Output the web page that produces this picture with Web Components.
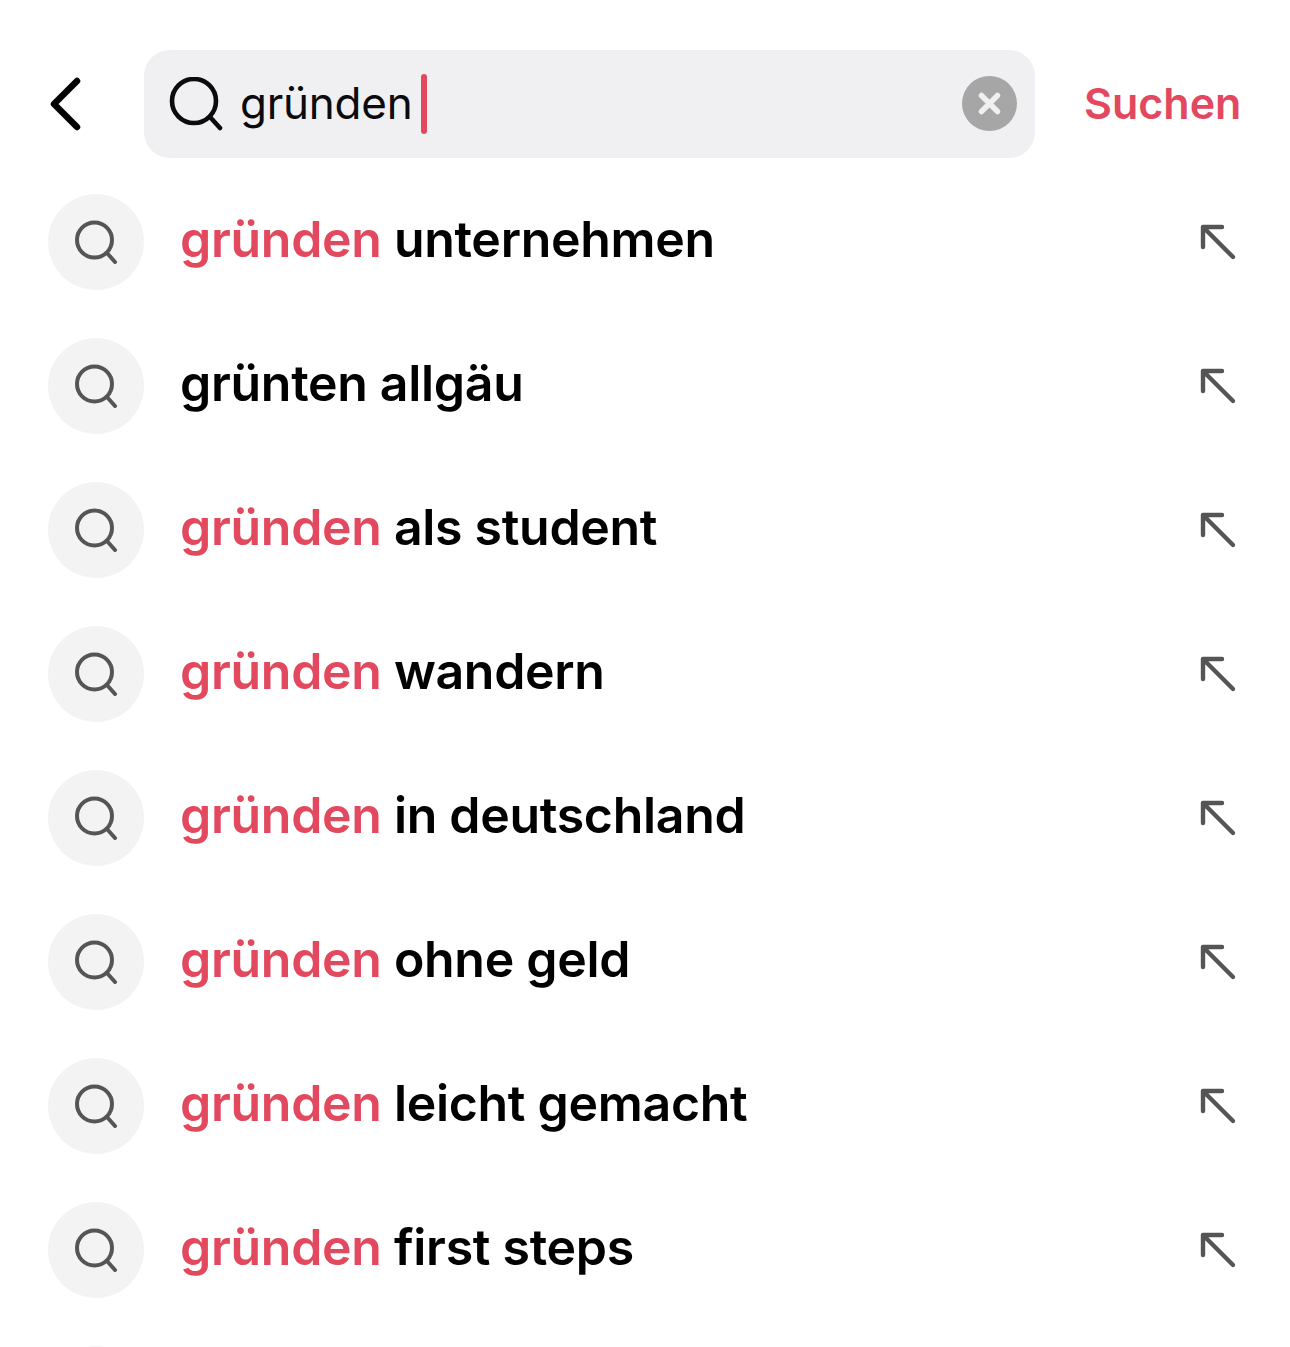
<!DOCTYPE html>
<html lang="de">
<head>
<meta charset="utf-8">
<title>Suche</title>
<style>
html, body { margin: 0; height: 100%; overflow: hidden; background: #fff; }
body { font-family: Inter, "Liberation Sans", sans-serif; }
</style>
</head>
<body>
<search-page>
    <search-bar slot="bar" value="gründen"></search-bar>
    <suggestion-row match="gründen" rest=" unternehmen"></suggestion-row>
    <suggestion-row rest="grünten allgäu"></suggestion-row>
    <suggestion-row match="gründen" rest=" als student"></suggestion-row>
    <suggestion-row match="gründen" rest=" wandern"></suggestion-row>
    <suggestion-row match="gründen" rest=" in deutschland"></suggestion-row>
    <suggestion-row match="gründen" rest=" ohne geld"></suggestion-row>
    <suggestion-row match="gründen" rest=" leicht gemacht"></suggestion-row>
    <suggestion-row match="gründen" rest=" first steps"></suggestion-row>
    <suggestion-row></suggestion-row>
</search-page>

<script>
const pageTemplate = document.createElement("template");
pageTemplate.innerHTML = `
<style>
:host {
  display: block;
  width: 1290px;
  height: 1347px;
  overflow: hidden;
  box-sizing: border-box;
  padding: 50px 48px 0;
}
.list {
  display: flex;
  flex-direction: column;
  gap: 48px;
  margin-top: 36px;
}
</style>
<slot name="bar"></slot>
<div class="list"><slot></slot></div>
`;

class SearchPage extends HTMLElement {
    constructor () {
	super();
	this.attachShadow({ mode: "open" });
	this.shadowRoot.appendChild( pageTemplate.content.cloneNode(true) );
    }
}

const barTemplate = document.createElement("template");
barTemplate.innerHTML = `
<style>
:host {
  display: flex;
  align-items: center;
  height: 108px;
}
.back {
  width: 96px;
  flex: none;
  display: flex;
}
.field {
  flex: none;
  width: 891px;
  height: 108px;
  box-sizing: border-box;
  padding: 0 18px 0 25px;
  display: flex;
  align-items: center;
  background: #f0f0f2;
  border-radius: 26px;
}
.value {
  margin-left: 17px;
  font-size: 44px;
  letter-spacing: -0.25px;
  color: #0b0b0f;
  white-space: pre;
  position: relative;
  top: -1px;
}
.caret {
  width: 6px;
  height: 60px;
  margin-left: 9px;
  border-radius: 3px;
  background: #e2495f;
}
.clear {
  margin-left: auto;
  display: flex;
  position: relative;
  top: -1px;
}
.submit {
  margin-left: 49px;
  font-size: 43px;
  font-weight: 600;
  color: #e2495f;
  white-space: pre;
  position: relative;
  top: -1px;
}
svg { display: block; }
</style>
<div class="back">
    <svg width="36" height="56" viewBox="0 0 36 56" fill="none" stroke="#000" stroke-width="6.5" stroke-linecap="round" stroke-linejoin="round"><path d="M29 5 L6 28 L29 51"/></svg>
</div>
<div class="field">
    <svg width="54" height="54" viewBox="0 0 54 54" fill="none" stroke="#0b0b0f" stroke-width="4.6" stroke-linecap="round"><circle cx="25" cy="24" r="22"/><path d="M41 40 L51 51"/></svg>
    <span class="value"></span>
    <span class="caret"></span>
    <span class="clear">
	<svg width="55" height="55" viewBox="0 0 55 55"><circle cx="27.5" cy="27.5" r="27.5" fill="#a6a6a6"/><path d="M19.5 19.5 L35.5 35.5 M35.5 19.5 L19.5 35.5" stroke="#f0f0f2" stroke-width="5.5" stroke-linecap="round"/></svg>
    </span>
</div>
<span class="submit">Suchen</span>
`;

class SearchBar extends HTMLElement {
    constructor () {
	super();
	this.attachShadow({ mode: "open" });
	this.shadowRoot.appendChild( barTemplate.content.cloneNode(true) );
	this.$value = this.shadowRoot.querySelector(".value");
    }

    connectedCallback() {
	this.$value.textContent = this.getAttribute("value") || "";
    }
}

const rowTemplate = document.createElement("template");
rowTemplate.innerHTML = `
<style>
:host {
  display: flex;
  align-items: center;
  height: 96px;
  flex: none;
}
.bubble {
  width: 96px;
  height: 96px;
  flex: none;
  border-radius: 50%;
  background: #f3f3f3;
  display: flex;
  align-items: center;
  justify-content: center;
}
.text {
  margin-left: 36px;
  font-size: 50px;
  font-weight: 600;
  letter-spacing: -0.3px;
  color: #000;
  white-space: pre;
  position: relative;
  top: -3px;
}
.match { color: #e2495f; }
.fill {
  flex: 1;
}
svg { display: block; }
</style>
<div class="bubble">
    <svg width="44" height="44" viewBox="0 0 44 44" fill="none" stroke="#555" stroke-width="4" stroke-linecap="round"><circle cx="20.5" cy="20" r="17.5"/><path d="M33 33 L41 42"/></svg>
</div>
<div class="text"><span class="match"></span><span class="rest"></span></div>
<div class="fill"></div>
<svg width="40" height="40" viewBox="0 0 40 40" fill="none" stroke="#555" stroke-width="4.4" stroke-linecap="round" stroke-linejoin="round" style="margin-right:5px"><path d="M6 25 V5 H25 M7 6 L36 35"/></svg>
`;

class SuggestionRow extends HTMLElement {
    constructor () {
	super();
	this.attachShadow({ mode: "open" });
	this.shadowRoot.appendChild( rowTemplate.content.cloneNode(true) );
    }

    connectedCallback() {
	this.shadowRoot.querySelector(".match").textContent = this.getAttribute("match") || "";
	this.shadowRoot.querySelector(".rest").textContent = this.getAttribute("rest") || "";
    }
}

customElements.define("search-page", SearchPage );
customElements.define("search-bar", SearchBar );
customElements.define("suggestion-row", SuggestionRow );
</script>
</body>
</html>
